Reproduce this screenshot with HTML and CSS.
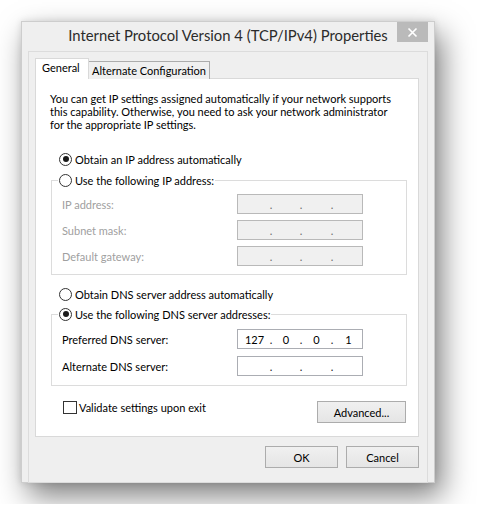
FILE: index.html
```html
<!DOCTYPE html>
<html lang="en">
<head>
<meta charset="UTF-8" />
<title>Internet Protocol Version 4 (TCP/IPv4) Properties</title>
<link rel="stylesheet" href="styles.css">
</head>
<body>

<div class="window">
  <div class="titlebar">
    Internet Protocol Version 4 (TCP/IPv4) Properties
    <button class="btn-close" aria-label="Close">
      <svg width="11" height="11" viewBox="0 0 11 11"><path d="M1.5 1.5 L9.5 9.5 M9.5 1.5 L1.5 9.5" stroke="#fff" stroke-width="1.7" /></svg>
    </button>
  </div>

  <div class="client">
    <div class="tabs">
      <div class="tab active">General</div>
      <div class="tab">Alternate Configuration</div>
    </div>

    <div class="panel">
      <p class="intro">You can get IP settings assigned automatically if your network supports<br>this capability. Otherwise, you need to ask your network administrator<br>for the appropriate IP settings.</p>

      <label class="option first"><span class="radio checked"></span>Obtain an IP address automatically</label>

      <fieldset class="group ip-group">
        <legend><label class="option"><span class="radio"></span>Use the following IP address:</label></legend>
        <div class="row disabled"><span class="field-label">IP address:</span><span class="ip-box"><b></b><i>.</i><b></b><i>.</i><b></b><i>.</i><b></b></span></div>
        <div class="row disabled"><span class="field-label">Subnet mask:</span><span class="ip-box"><b></b><i>.</i><b></b><i>.</i><b></b><i>.</i><b></b></span></div>
        <div class="row disabled"><span class="field-label">Default gateway:</span><span class="ip-box"><b></b><i>.</i><b></b><i>.</i><b></b><i>.</i><b></b></span></div>
      </fieldset>

      <label class="option dns-auto"><span class="radio"></span>Obtain DNS server address automatically</label>

      <fieldset class="group dns-group">
        <legend><label class="option"><span class="radio checked"></span>Use the following DNS server addresses:</label></legend>
        <div class="row"><span class="field-label">Preferred DNS server:</span><span class="ip-box"><b>127</b><i>.</i><b>0</b><i>.</i><b>0</b><i>.</i><b>1</b></span></div>
        <div class="row"><span class="field-label">Alternate DNS server:</span><span class="ip-box"><b></b><i>.</i><b></b><i>.</i><b></b><i>.</i><b></b></span></div>
      </fieldset>

      <div class="panel-footer">
        <label class="check"><span class="checkbox"></span>Validate settings upon exit</label>
        <button class="btn btn-advanced">Advanced...</button>
      </div>
    </div>

    <div class="dialog-buttons">
      <button class="btn">OK</button>
      <button class="btn">Cancel</button>
    </div>
  </div>
</div>

</body>
</html>
```
FILE: styles.css
```css
body {
  margin: 0;
  padding: 21px;
  background: #fff;
  font-family: Lato, "Liberation Sans", sans-serif;
  font-size: 11px;
  color: #000;
}
.window {
  width: 412px;
  height: 460px;
  border: 1px solid #cdcdcd;
  background: #efefef;
  box-shadow: 7px 13px 28px rgba(0,0,0,0.5), 0 0 7px rgba(0,0,0,0.12);
}
.titlebar {
  position: relative;
  height: 29px;
  line-height: 27px;
  text-align: center;
  font-size: 14.8px;
  color: #2b2b2b;
}
.btn-close {
  position: absolute;
  top: 0;
  right: 6px;
  width: 31px;
  height: 20px;
  border: none;
  padding: 0;
  background: #bababa;
  display: flex;
  align-items: center;
  justify-content: center;
}
.client {
  margin: 0 6px;
  height: 423px;
  border: 1px solid #dcdcdc;
  padding: 7px 8px 0 6px;
}
.tabs {
  display: flex;
  align-items: flex-end;
  height: 20px;
  margin-bottom: -1px;
  position: relative;
}
.tab {
  height: 17px;
  line-height: 17px;
  padding: 0 3px;
  background: #f0f0f0;
  border: 1px solid #acacac;
  border-bottom: none;
}
.tab.active {
  height: 20px;
  line-height: 18px;
  padding: 0 6px;
  width: 40px;
  background: #fff;
  border-color: #d9d9d9;
  margin-right: -1px;
  position: relative;
  z-index: 1;
}
.panel {
  height: 357px;
  background: #fff;
  border: 1px solid #d9d9d9;
  padding: 0 11px 0 14px;
}
.intro {
  margin: 13px 0 0;
  line-height: 13px;
  white-space: nowrap;
}
.option {
  display: flex;
  align-items: center;
  height: 16px;
  white-space: nowrap;
}
.option.first {
  margin: 20px 0 0 9px;
}
.radio {
  width: 11px;
  height: 11px;
  border: 1px solid #333;
  border-radius: 50%;
  background: #fff;
  margin-right: 3px;
  display: flex;
  align-items: center;
  justify-content: center;
}
.radio.checked::after {
  content: "";
  width: 6px;
  height: 6px;
  border-radius: 50%;
  background: #1a1a1a;
}
/* group boxes */
.group {
  margin: 5px 0 0 1px;
  padding: 0 0 8px 10px;
  border: 1px solid #dcdcdc;
  min-width: 0;
}
.group legend {
  padding: 0 1px;
  margin-left: -4px;
}
.dns-group {
  margin-top: 4px;
  padding-bottom: 9px;
}
.row {
  display: flex;
  align-items: center;
  height: 20px;
  margin-top: 6px;
}
.dns-group .row {
  margin-top: 7px;
}
.field-label {
  width: 175px;
}
.row.disabled .field-label {
  color: #a0a0a0;
}
.ip-box {
  width: 121px;
  height: 18px;
  padding-left: 3px;
  border: 1px solid #abadb3;
  background: #fff;
  display: grid;
  grid-template-columns: 27px 6px 24px 6px 25px 6px 27px;
  align-items: center;
}
.ip-box b {
  font-weight: normal;
  text-align: center;
}
.ip-box i {
  font-style: normal;
  text-align: center;
  color: #222;
}
.row.disabled .ip-box {
  background: #f0f0f0;
  border-color: #b9b9b9;
}
.row.disabled .ip-box i {
  color: #6d6d6d;
}
.dns-auto {
  margin: 11px 0 0 9px;
}
.panel-footer {
  display: flex;
  justify-content: space-between;
  align-items: flex-start;
  margin: 15px 1px 0 13px;
}
.check {
  display: flex;
  align-items: center;
  height: 12px;
}
.checkbox {
  width: 12px;
  height: 11px;
  border: 1px solid #333;
  background: #fff;
  margin-right: 2px;
}
.btn {
  height: 22px;
  border: 1px solid #acacac;
  background: linear-gradient(#f0f0f0, #e5e5e5);
  font-family: Lato, "Liberation Sans", sans-serif;
  font-size: 11px;
  color: #000;
  padding: 0;
}
.btn-advanced {
  width: 89px;
}
.dialog-buttons {
  display: flex;
  justify-content: flex-end;
  gap: 8px;
  margin-top: 9px;
}
.dialog-buttons .btn {
  width: 73px;
}
```
